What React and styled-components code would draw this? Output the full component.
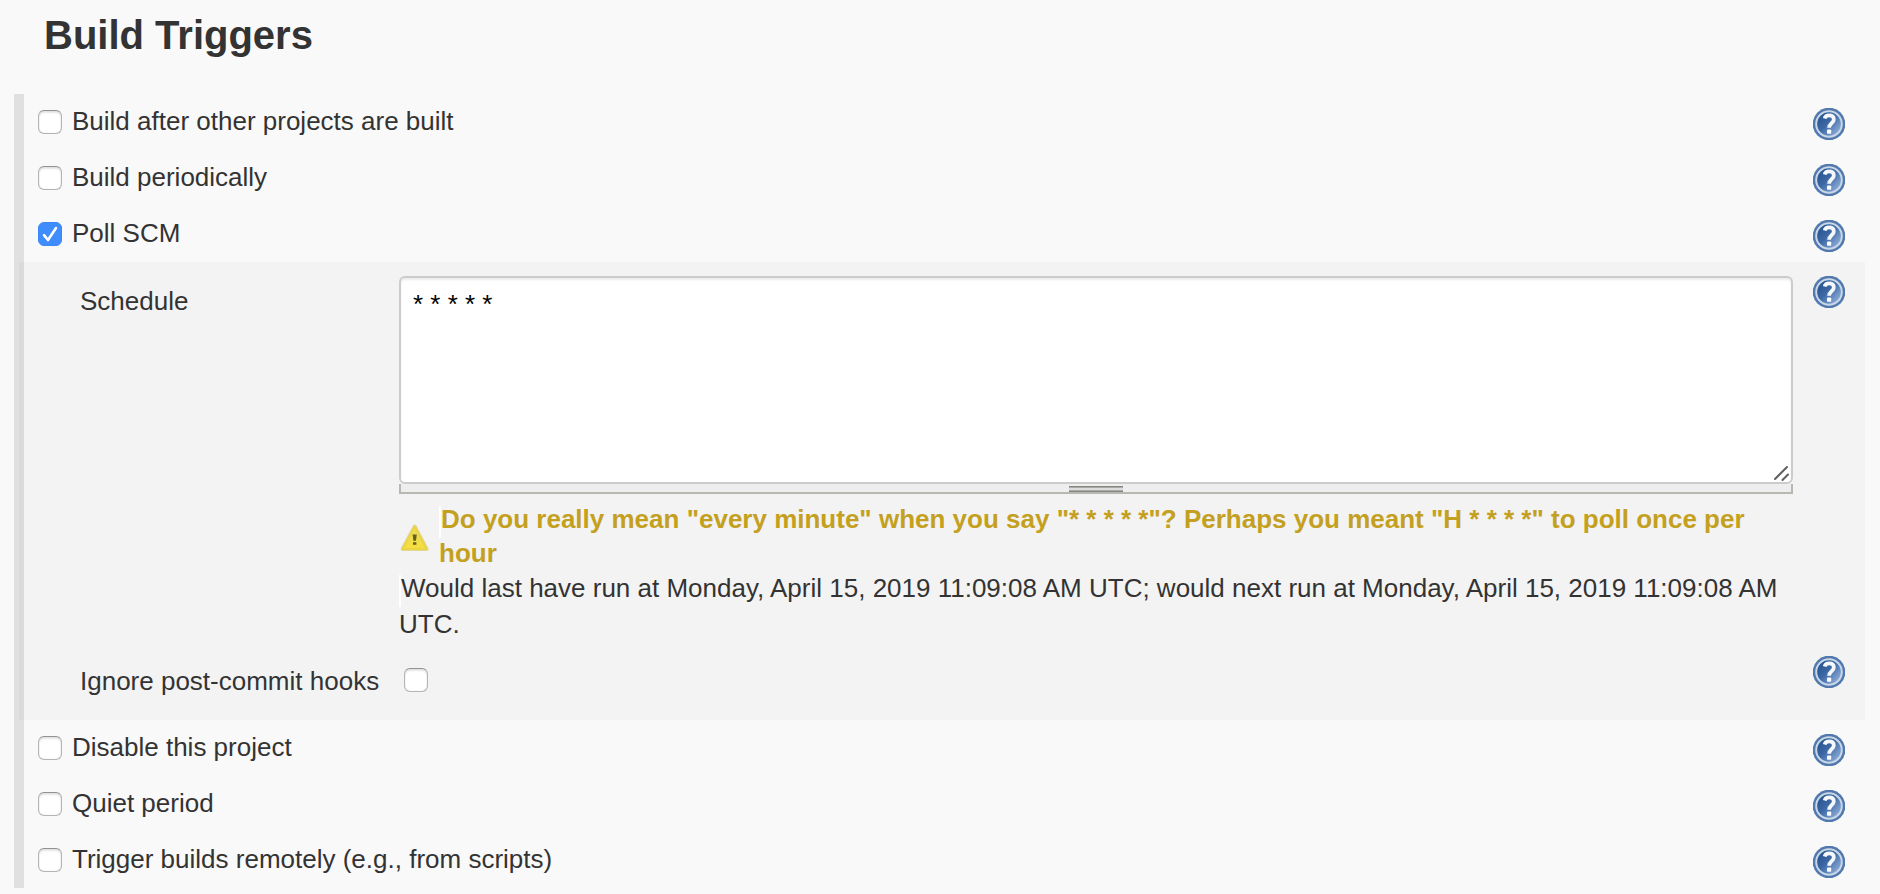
import React from 'react';
import styled, { createGlobalStyle } from 'styled-components';

const GlobalStyle = createGlobalStyle`
  *, *::before, *::after { box-sizing: border-box; }
  body {
    margin: 0;
    background: #f9f9f9;
    color: #333;
    font-family: "Liberation Sans", Arial, Helvetica, sans-serif;
    font-size: 26px;
    line-height: 32px;
  }
`;

const Page = styled.main`
  padding: 12px 15px 6px 14px;
`;

const Title = styled.h2`
  margin: 0 0 36px 30px;
  font-size: 40px;
  line-height: 46px;
  font-weight: bold;
`;

const Triggers = styled.section`
  border-left: 10px solid #e0e0e0;
`;

const TriggerRow = styled.div`
  display: flex;
  align-items: flex-start;
  justify-content: space-between;
  height: 56px;
  padding: 14px 20px 0 14px;
`;

const Option = styled.label`
  display: flex;
  align-items: center;
  gap: 10px;
  height: 28px;
`;

const OptionText = styled.span`
  padding-bottom: 2px;
`;

const CheckFrame = styled.span`
  display: inline-grid;
  flex: none;
  width: 24px;
  height: 24px;

  & > * { grid-area: 1 / 1; }
  & > svg { pointer-events: none; visibility: hidden; }
  & > input:checked + svg { visibility: visible; }
`;

const CheckInput = styled.input`
  appearance: none;
  width: 24px;
  height: 24px;
  margin: 0;
  border: 1px solid #b4b4b4;
  border-top-color: #929292;
  border-radius: 6px;
  background: #fff;
  box-shadow: inset 0 2px 2px rgba(0, 0, 0, 0.1), inset 0 0 1px rgba(0, 0, 0, 0.2);

  &:checked {
    border-color: #3b88fb;
    background: #3f8cfd;
    box-shadow: none;
  }
`;

const HelpButton = styled.button`
  display: block;
  flex: none;
  width: 32px;
  height: 32px;
  padding: 0;
  border: 0;
  background: none;
  cursor: pointer;

  & > svg { display: block; }
`;

const Panel = styled.div`
  display: grid;
  gap: 14px;
  margin-left: -5px;
  padding: 14px 20px 23px 61px;
  background: rgba(0, 0, 0, 0.025);
`;

const Field = styled.div`
  display: grid;
  grid-template-columns: 299px minmax(0, 1fr) 32px;
  column-gap: 20px;
  align-items: start;
`;

const FieldLabel = styled.label`
  padding-top: 9px;
  white-space: nowrap;
`;

const CheckSlot = styled.div`
  display: flex;
  padding: 12px 0 0 5px;
`;

const ScheduleBox = styled.textarea`
  display: block;
  width: 100%;
  height: 208px;
  padding: 10px 12px;
  border: 2px solid #ccc;
  border-radius: 6px;
  background: #fff;
  box-shadow: inset 0 2px 2px rgba(0, 0, 0, 0.08);
  color: #000;
  font: inherit;
  resize: none;
  overflow: hidden;
  outline: none;
`;

const ScheduleFrame = styled.div`
  position: relative;
`;

const ResizeCorner = styled.svg`
  position: absolute;
  right: 4px;
  bottom: 3px;
  pointer-events: none;
`;

const ResizeBar = styled.div`
  display: flex;
  justify-content: center;
  align-items: flex-end;
  height: 10px;
  border: 2px solid #b8b8b0;
  border-top: 0;
  background: #eee;
  cursor: row-resize;
`;

const Grip = styled.span`
  width: 54px;
  height: 6px;
  border: solid #888880;
  border-width: 1px 0;
  background: #ddd;
  box-shadow: inset 0 1px #a8a8a4, inset 0 -1px #a8a8a4;
`;

const Warning = styled.div`
  display: flex;
  align-items: center;
  gap: 8px;
  margin-top: 8px;
  color: #c4a021;
  font-weight: bold;

  & > svg { flex: none; }
`;

const Message = styled.div`
  line-height: ${(p) => p.$line}px;

  &::before {
    content: "";
    display: inline-block;
    width: 2px;
    height: 32px;
    margin-bottom: -4px;
    vertical-align: -6px;
    background: #fff;
  }
`;

function Checkbox(props) {
  return (
    <CheckFrame>
      <CheckInput type="checkbox" {...props} />
      <svg width="24" height="24" viewBox="0 0 24 24" fill="none" aria-hidden="true">
        <path d="M6 13.200 10 18 18 6" stroke="#fff" strokeWidth="2.600" strokeLinecap="round" strokeLinejoin="round" />
      </svg>
    </CheckFrame>
  );
}

function Help({ topic }) {
  return (
    <HelpButton type="button" aria-label={`Help for feature: ${topic}`}>
      <svg width="32" height="32" viewBox="0 0 32 32" aria-hidden="true">
        <defs>
          <linearGradient id="helpFill" x1="0.1" y1="0.2" x2="0.9" y2="0.9">
            <stop offset="0" stopColor="#28548f" />
            <stop offset="0.4" stopColor="#3c68a5" />
            <stop offset="1" stopColor="#93b2da" />
          </linearGradient>
        </defs>
        <circle cx="16" cy="16" r="16.300" fill="#5279ad" />
        <circle cx="16" cy="16" r="12.800" fill="url(#helpFill)" stroke="#c9d6e8" strokeWidth="2" />
        <path d="M11.600 10.400C12.200 8.300 13.900 7.400 16.100 7.400c2.900 0 4.700 1.500 4.700 4 0 3.800-4.700 3.700-4.700 8.400" fill="none" stroke="#f6f9fc" strokeWidth="3.800" />
        <rect x="14" y="21.500" width="4.200" height="4.200" rx="0.800" fill="#fff" />
      </svg>
    </HelpButton>
  );
}

function WarningIcon() {
  return (
    <svg width="32" height="32" viewBox="0 0 32 32" aria-hidden="true">
      <defs>
        <linearGradient id="warnFill" x1="0" y1="0" x2="0" y2="1">
          <stop offset="0" stopColor="#e8da60" />
          <stop offset="1" stopColor="#f7df3e" />
        </linearGradient>
      </defs>
      <path d="M15.700 6.500 27.600 29h-24Z" fill="url(#warnFill)" stroke="#c9bd7a" strokeWidth="4" strokeLinejoin="round" opacity="0.500" />
      <path d="M15.700 6.500 27.600 29h-24Z" fill="url(#warnFill)" stroke="#ecd544" strokeWidth="2.400" strokeLinejoin="round" />
      <path d="M13.600 14.500h4.200l-.8 6.300h-2.600ZM14 22.300h3.400v2.500H14Z" fill="#655f22" />
    </svg>
  );
}

function Trigger({ children, checked }) {
  return (
    <TriggerRow>
      <Option>
        <Checkbox defaultChecked={checked} />
        <OptionText>{children}</OptionText>
      </Option>
      <Help topic={children} />
    </TriggerRow>
  );
}

export default function App() {
  return (
    <>
      <GlobalStyle />
      <Page>
        <Title>Build Triggers</Title>
        <Triggers>
          <Trigger>Build after other projects are built</Trigger>
          <Trigger>Build periodically</Trigger>
          <Trigger checked>Poll SCM</Trigger>
          <Panel>
            <Field>
              <FieldLabel htmlFor="schedule">Schedule</FieldLabel>
              <div>
                <ScheduleFrame>
                  <ScheduleBox id="schedule" defaultValue="* * * * *" spellCheck={false} />
                  <ResizeCorner width="16" height="16" viewBox="0 0 16 16" aria-hidden="true">
                    <path d="M2 14 14 2M9.500 15 15 9.500" stroke="#606060" strokeWidth="2" strokeLinecap="round" />
                  </ResizeCorner>
                </ScheduleFrame>
                <ResizeBar><Grip /></ResizeBar>
                <Warning>
                  <WarningIcon />
                  <Message $line={34}>
                    Do you really mean "every minute" when you say "* * * * *"? Perhaps you meant "H * * * *" to poll once per hour
                  </Message>
                </Warning>
                <Message $line={36}>
                  Would last have run at Monday, April 15, 2019 11:09:08 AM UTC; would next run at Monday, April 15, 2019 11:09:08 AM UTC.
                </Message>
              </div>
              <Help topic="Schedule" />
            </Field>
            <Field>
              <FieldLabel htmlFor="ignore-hooks">Ignore post-commit hooks</FieldLabel>
              <CheckSlot><Checkbox id="ignore-hooks" /></CheckSlot>
              <Help topic="Ignore post-commit hooks" />
            </Field>
          </Panel>
          <Trigger>Disable this project</Trigger>
          <Trigger>Quiet period</Trigger>
          <Trigger>Trigger builds remotely (e.g., from scripts)</Trigger>
        </Triggers>
      </Page>
    </>
  );
}
